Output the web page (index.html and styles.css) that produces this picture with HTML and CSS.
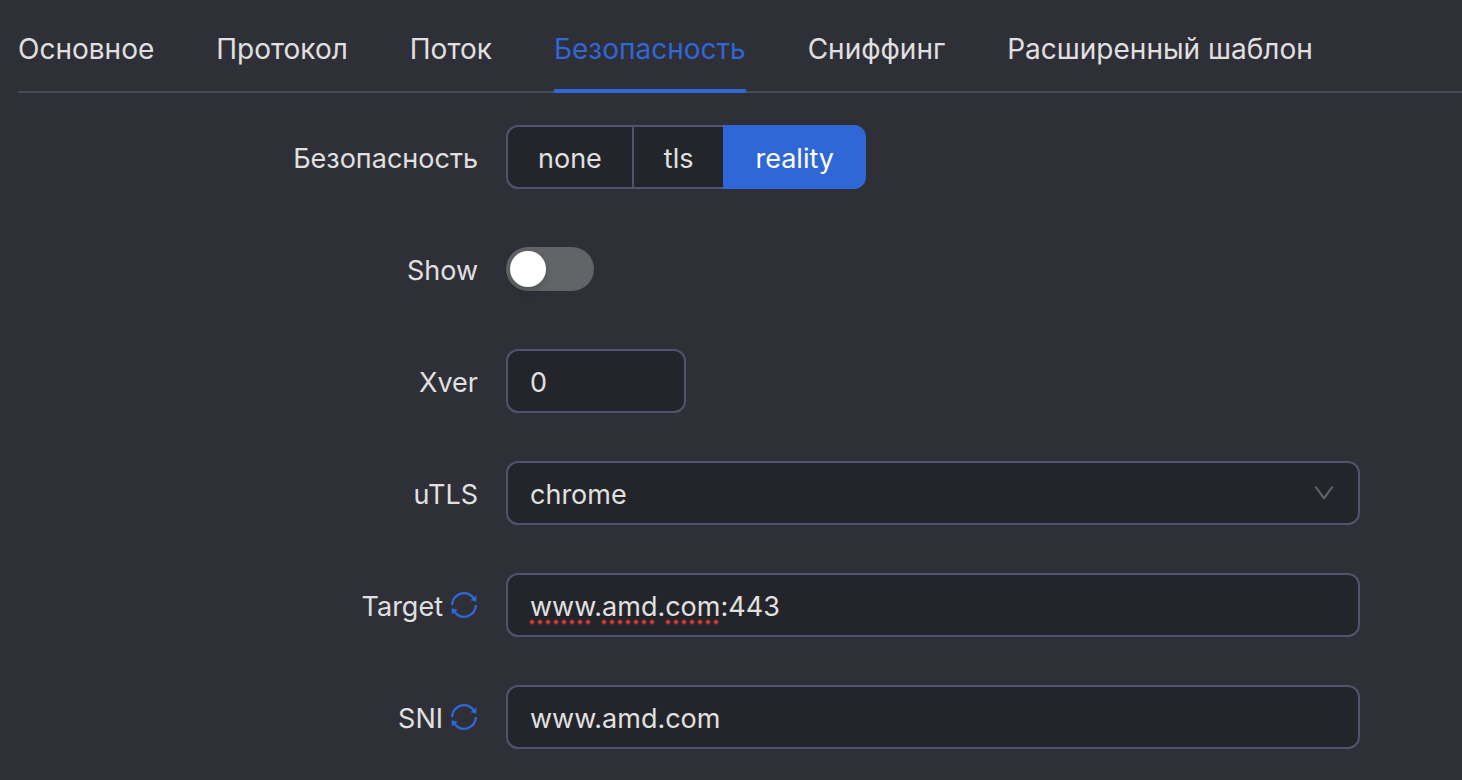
FILE: index.html
```html
<!DOCTYPE html>
<html lang="ru">
<head>
  <meta charset="UTF-8">
  <meta name="viewport" content="width=device-width, initial-scale=1.0">
  <title>Безопасность</title>
  <link rel="stylesheet" href="styles.css">
</head>
<body>
  <svg class="sprite" aria-hidden="true">
    <symbol id="icon-sync" viewBox="92 92 840 840">
      <path d="M168 504.2c1-43.7 10-86.1 26.9-126 17.3-41 42.1-77.7 73.7-109.4S337 212.3 378 195c42.4-17.9 87.4-27 133.9-27s91.5 9.1 133.8 27A341.5 341.5 0 01755 268.8c9.9 9.9 19.2 20.4 27.8 31.4l-60.2 47a8 8 0 003 14.1l175.7 43c5 1.2 9.9-2.6 9.9-7.7l.8-180.9c0-6.7-7.7-10.5-12.9-6.3l-56.4 44.1C765.8 155.1 646.2 92 511.8 92 282.7 92 96.3 275.6 92 503.8a8 8 0 008 8.2h60c4.4 0 7.9-3.5 8-7.8zm756 7.8h-60c-4.4 0-7.9 3.5-8 7.8-1 43.7-10 86.1-26.9 126-17.3 41-42.1 77.8-73.7 109.4A342.45 342.45 0 01512.1 856a342.24 342.24 0 01-243.2-100.8c-9.9-9.9-19.2-20.4-27.8-31.4l60.2-47a8 8 0 00-3-14.1l-175.7-43c-5-1.2-9.9 2.6-9.9 7.7l-.7 181c0 6.7 7.7 10.5 12.9 6.3l56.4-44.1C258.2 868.9 377.8 932 512.2 932c229.2 0 415.5-183.7 419.8-411.8a8 8 0 00-8-8.2z"/>
    </symbol>
    <symbol id="icon-down" viewBox="0 0 1024 1024">
      <path d="M884 256h-75c-5.1 0-9.9 2.5-12.9 6.6L512 654.2 227.9 262.6c-3-4.1-7.8-6.6-12.9-6.6h-75c-6.5 0-10.3 7.4-6.5 12.7l352.6 486.1c12.8 17.6 39 17.6 51.7 0l352.6-486.1c3.9-5.3.1-12.7-6.4-12.7z"/>
    </symbol>
  </svg>

  <main class="panel">
    <div class="tabs" role="tablist">
      <button type="button" class="tab" role="tab">Основное</button>
      <button type="button" class="tab" role="tab">Протокол</button>
      <button type="button" class="tab" role="tab">Поток</button>
      <button type="button" class="tab active" role="tab" aria-selected="true">Безопасность</button>
      <button type="button" class="tab" role="tab">Сниффинг</button>
      <button type="button" class="tab" role="tab">Расширенный шаблон</button>
    </div>

    <form class="form">
      <div class="row">
        <span class="label" id="securityLabel">Безопасность</span>
        <div class="radio-group" role="radiogroup" aria-labelledby="securityLabel">
          <label class="radio"><input type="radio" name="security" value="none"><span>none</span></label>
          <label class="radio"><input type="radio" name="security" value="tls"><span>tls</span></label>
          <label class="radio"><input type="radio" name="security" value="reality" checked><span>reality</span></label>
        </div>
      </div>

      <div class="row">
        <label class="label" for="show">Show</label>
        <input type="checkbox" class="switch" id="show" role="switch">
      </div>

      <div class="row">
        <label class="label" for="xver">Xver</label>
        <input type="number" class="input input-number" id="xver" value="0">
      </div>

      <div class="row">
        <label class="label" for="utls">uTLS</label>
        <div class="control">
          <select class="input select" id="utls">
            <option selected>chrome</option>
            <option>firefox</option>
            <option>safari</option>
          </select>
          <svg class="arrow" aria-hidden="true"><use href="#icon-down"/></svg>
        </div>
      </div>

      <div class="row">
        <div class="label">
          <label for="target">Target</label>
          <button type="button" class="sync" aria-label="Обновить Target"><svg><use href="#icon-sync"/></svg></button>
        </div>
        <div class="control">
          <input type="text" class="input" id="target" value="www.amd.com:443" spellcheck="false">
          <div class="spelling" aria-hidden="true">
            <span class="long"></span><span></span><span></span>
          </div>
        </div>
      </div>

      <div class="row">
        <div class="label">
          <label for="sni">SNI</label>
          <button type="button" class="sync" aria-label="Обновить SNI"><svg><use href="#icon-sync"/></svg></button>
        </div>
        <input type="text" class="input" id="sni" value="www.amd.com" spellcheck="false">
      </div>
    </form>
  </main>
</body>
</html>
```
FILE: styles.css
```css
* {
  box-sizing: border-box;
}
body {
  margin: 0;
  background: #2f2f38;
  color: #e0e0e0;
  font-family: Inter, "Noto Sans", sans-serif;
  font-size: 27px;
  line-height: 44px;
}
button, input, select {
  font: inherit;
  color: inherit;
  margin: 0;
}
.sprite {
  display: none;
}
.panel {
  padding-left: 18px;
}

/* tabs */
.tabs {
  display: flex;
  gap: 62px;
  height: 93px;
  border-bottom: 2px solid #444a5a;
  font-size: 28px;
  white-space: nowrap;
}
.tab {
  height: 93px;
  padding: 8px 0 0;
  background: none;
  border: none;
  border-bottom: 4px solid transparent;
  cursor: pointer;
}
.tab.active {
  color: #3067d6;
  border-bottom-color: #3067d6;
}

/* form */
.form {
  display: grid;
  gap: 48px;
  padding: 32px 102px 32px 0;
}
.row {
  display: grid;
  grid-template-columns: 460px 1fr;
  column-gap: 28px;
  align-items: center;
  height: 64px;
}
.label {
  display: flex;
  justify-content: flex-end;
  align-items: center;
  gap: 8px;
  padding-top: 4px;
}
.input {
  width: 100%;
  height: 64px;
  padding: 2px 22px 0;
  background: #24252b;
  border: 2px solid #50546c;
  border-radius: 12px;
  outline: none;
  appearance: none;
}
.input-number {
  width: 180px;
  -moz-appearance: textfield;
}
.input-number::-webkit-inner-spin-button {
  display: none;
}
.select {
  padding-top: 4px;
}
.control {
  position: relative;
}
.arrow {
  position: absolute;
  top: 19px;
  right: 23px;
  width: 26px;
  height: 26px;
  fill: #626366;
  pointer-events: none;
}

/* radio buttons */
.radio-group {
  display: flex;
}
.radio {
  height: 64px;
  padding: 10px 30px 0;
  background: #24252b;
  border: 2px solid #50546c;
  cursor: pointer;
}
.radio + .radio {
  margin-left: -2px;
}
.radio:first-child {
  border-radius: 12px 0 0 12px;
}
.radio:last-child {
  border-radius: 0 12px 12px 0;
}
.radio input {
  position: absolute;
  opacity: 0;
}
.radio:has(input:checked) {
  background: #3067d6;
  border-color: #3067d6;
  color: #fff;
}

/* switch */
.switch {
  appearance: none;
  width: 88px;
  height: 44px;
  padding: 4px;
  border-radius: 22px;
  background: #636468;
  cursor: pointer;
}
.switch::before {
  content: "";
  display: block;
  width: 36px;
  height: 36px;
  border-radius: 50%;
  background: #fff;
  box-shadow: 0 4px 8px rgba(0, 35, 11, 0.2);
}
.switch:checked {
  background: #3067d6;
}
.switch:checked::before {
  margin-left: 44px;
}

.sync {
  display: flex;
  padding: 0;
  background: none;
  border: none;
  cursor: pointer;
}
.sync svg {
  width: 26px;
  height: 26px;
  margin: 0 1px 4px 0;
  fill: #3067d6;
}

/* dotted marks under the unknown words */
.spelling {
  position: absolute;
  left: 22px;
  bottom: 11px;
  display: flex;
  gap: 8px;
  pointer-events: none;
}
.spelling span {
  width: 56px;
  height: 8px;
  background: radial-gradient(circle, #ec3a2b 1px, transparent 3px) 0 0 / 8px 8px;
}
.spelling .long {
  width: 64px;
}
```
